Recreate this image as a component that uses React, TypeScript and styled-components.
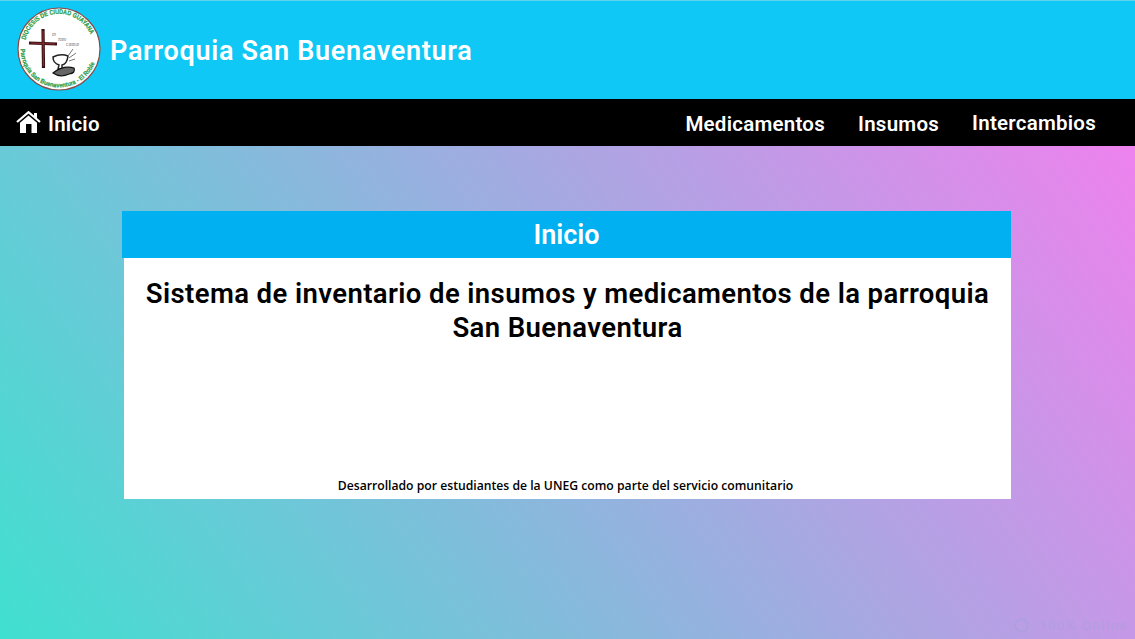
import styled, { createGlobalStyle } from "styled-components";

const GlobalStyle = createGlobalStyle`
    html, body {
        margin: 0;
        padding: 0;
        height: 100%;
    }
    body {
        font-family: Roboto, "Liberation Sans", sans-serif;
        overflow: hidden;
    }
`

const Page = styled.div`
    position: relative;
    width: 1135px;
    height: 639px;
    display: flex;
    flex-direction: column;
`

const Header = styled.header`
    height: 98px;
    border-top: 1px solid #5fd3ee;
    background-color: #0fc8f5;
    display: flex;
    align-items: center;
    gap: 9px;
    padding-left: 17px;
`

const LogoMark = styled.svg`
    display: block;
    width: 84px;
    height: 84px;
    margin-bottom: 2px;
`

const HeaderTitle = styled.h1`
    margin: 2px 0 0;
    color: #fff;
    font-size: 27px;
    font-weight: 600;
    letter-spacing: 0.7px;
`

const Navbar = styled.nav`
    height: 47px;
    background-color: #000;
    display: flex;
    align-items: center;
    justify-content: space-between;
    padding: 0 39px 0 16px;
`

const NavHome = styled.a`
    display: flex;
    align-items: center;
    gap: 7px;
`

const HomeGlyph = styled.svg`
    display: block;
    width: 25px;
    height: 22px;
    margin-bottom: 2px;
`

const NavLinks = styled.div`
    display: flex;
    align-items: center;
    gap: 33px;
`

const NavLink = styled.a<{ $shift?: number }>`
    color: #fff;
    font-size: 20.5px;
    font-weight: 600;
    letter-spacing: 0.25px;
    margin-top: ${props => props.$shift ?? 0}px;
`

const Main = styled.main`
    flex: 1;
    padding: 65px 124px 0 122px;
    background: linear-gradient(55deg, #40e0d0 0%, #ee82ee 100%);
`

const Card = styled.section`
    height: 288px;
    display: flex;
    flex-direction: column;
`

const CardHead = styled.h2`
    margin: 0;
    height: 46px;
    padding-top: 1px;
    line-height: 47px;
    background-color: #00b0f0;
    color: #fff;
    text-align: center;
    font-size: 27px;
    font-weight: 600;
`

const CardBody = styled.div`
    flex: 1;
    margin-left: 2px;
    background-color: #fff;
    display: flex;
    flex-direction: column;
    justify-content: space-between;
    align-items: center;
    padding: 19px 0 5px;
`

const Lead = styled.p`
    margin: 0;
    width: 860px;
    color: #000;
    text-align: center;
    font-size: 27.5px;
    line-height: 34px;
    font-weight: 600;
    letter-spacing: 0.4px;
`

const Credit = styled.p`
    margin: 0 4px 0 0;
    color: #000;
    font-family: "Open Sans", sans-serif;
    font-size: 12.2px;
    line-height: 16px;
    font-weight: 600;
`

const Watermark = styled.div`
    position: absolute;
    right: 7px;
    bottom: 6px;
    display: flex;
    align-items: center;
    gap: 10px;
    color: #a9a0dc;
    font-size: 13px;
    letter-spacing: 1.6px;
    opacity: 0.6;
`

const WatermarkGlyph = styled.svg`
    display: block;
    width: 15px;
    height: 15px;
`

function Logo() {
    return (
        <LogoMark viewBox="0 0 84 84">
            <defs>
                <path id="arcTop" d="M 8.5 33 A 34.5 34.5 0 0 1 74.5 30" />
                <path id="arcBottom" d="M 3.5 42 A 38.5 38.5 0 0 0 77.9 55.8" />
            </defs>
            <circle cx="42" cy="42" r="41" fill="#fff" stroke="#8a4a45" strokeWidth="1.2" />
            <text fontFamily="Liberation Sans, sans-serif" fontSize="6.6" fontWeight="700" fill="#1f9a3f" stroke="#1f9a3f" strokeWidth="0.2">
                <textPath href="#arcTop" textLength="85" lengthAdjust="spacingAndGlyphs">DIOCESIS DE CIUDAD GUAYANA</textPath>
            </text>
            <text fontFamily="Liberation Sans, sans-serif" fontSize="6.4" fontWeight="700" fill="#1f9a3f" stroke="#1f9a3f" strokeWidth="0.2">
                <textPath href="#arcBottom" textLength="106" lengthAdjust="spacingAndGlyphs">Parroquia San Buenaventura - El Roble</textPath>
            </text>
            <path d="M26 22 L26.5 61" stroke="#3a1214" strokeWidth="3.2" />
            <path d="M12 36 L40 37" stroke="#3a1214" strokeWidth="3.2" />
            <path d="M26 24 L26.5 59 M14 36 L38 37" stroke="#8c2a2e" strokeWidth="1.2" />
            <text x="35" y="29" fontFamily="Liberation Serif, serif" fontSize="3" fontStyle="italic" fill="#444">EN</text>
            <text x="41" y="34" fontFamily="Liberation Serif, serif" fontSize="3" fontStyle="italic" fill="#444">TODO</text>
            <text x="49" y="38.5" fontFamily="Liberation Serif, serif" fontSize="3" fontStyle="italic" fill="#444">CARIDAD</text>
            <path d="M36 50 Q44 46 51 49 Q50 57 45 58 L45 62 L41 62 L42 58 Q36 56 36 50Z" fill="#fff" stroke="#222" strokeWidth="1.5" />
            <path d="M51 49 L56 42 M52 51 L59 46 M52 54 L58 52" stroke="#777" strokeWidth="1" />
            <path d="M36 66 Q46 58 57 61 Q59 66 52 67 Q43 71 36 66Z" fill="#666" stroke="#111" strokeWidth="1.2" />
        </LogoMark>
    )
}

function HomeIcon() {
    return (
        <HomeGlyph viewBox="0 0 25 22">
            <path d="M1 11 L12.5 1.2 L24 11" fill="none" stroke="#fff" strokeWidth="2.2" />
            <path d="M18 2 H21 V7.5 L18 5 Z" fill="#fff" />
            <path d="M4 11.8 L12.5 4.6 L21 11.8 V22 H15.5 V13 H10 V22 H4 Z" fill="#fff" />
        </HomeGlyph>
    )
}

function WatermarkIcon() {
    return (
        <WatermarkGlyph viewBox="0 0 15 15">
            <circle cx="7.5" cy="7.5" r="6.2" fill="none" stroke="#a9a0dc" strokeWidth="2" />
        </WatermarkGlyph>
    )
}

export default function App() {
    return (
        <Page>
            <GlobalStyle />
            <Header>
                <Logo />
                <HeaderTitle>Parroquia San Buenaventura</HeaderTitle>
            </Header>
            <Navbar>
                <NavHome>
                    <HomeIcon />
                    <NavLink $shift={2}>Inicio</NavLink>
                </NavHome>
                <NavLinks>
                    <NavLink $shift={2}>Medicamentos</NavLink>
                    <NavLink $shift={3}>Insumos</NavLink>
                    <NavLink>Intercambios</NavLink>
                </NavLinks>
            </Navbar>
            <Main>
                <Card>
                    <CardHead>Inicio</CardHead>
                    <CardBody>
                        <Lead>Sistema de inventario de insumos y medicamentos de la parroquia San Buenaventura</Lead>
                        <Credit>Desarrollado por estudiantes de la UNEG como parte del servicio comunitario</Credit>
                    </CardBody>
                </Card>
            </Main>
            <Watermark>
                <WatermarkIcon />
                <span>100% Online</span>
            </Watermark>
        </Page>
    )
}
